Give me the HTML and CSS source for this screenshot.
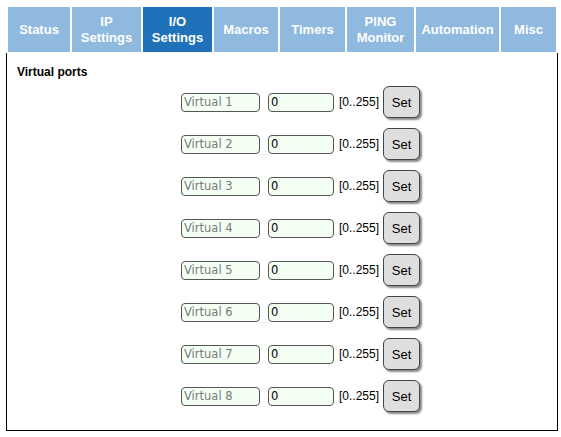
FILE: index.html
```html
<!DOCTYPE html>
<html lang="en">
<head>
    <meta charset="UTF-8">
    <title>I/O Settings</title>
    <link rel="stylesheet" href="styles.css">
</head>
<body>
    <div class="page">
        <div class="tabs">
            <a class="tab tab-status">Status</a>
            <a class="tab tab-ip">IP<br>Settings</a>
            <a class="tab tab-io active">I/O<br>Settings</a>
            <a class="tab tab-macros">Macros</a>
            <a class="tab tab-timers">Timers</a>
            <a class="tab tab-ping">PING<br>Monitor</a>
            <a class="tab tab-auto">Automation</a>
            <a class="tab tab-misc">Misc</a>
        </div>
        <div class="panel">
            <div class="section-title">Virtual ports</div>
            <div class="ports">
                <div class="port-row">
                    <input class="port-name" type="text" value="Virtual 1">
                    <input class="port-value" type="text" value="0">
                    <span class="range">[0..255]</span>
                    <button class="set-btn">Set</button>
                </div>
                <div class="port-row">
                    <input class="port-name" type="text" value="Virtual 2">
                    <input class="port-value" type="text" value="0">
                    <span class="range">[0..255]</span>
                    <button class="set-btn">Set</button>
                </div>
                <div class="port-row">
                    <input class="port-name" type="text" value="Virtual 3">
                    <input class="port-value" type="text" value="0">
                    <span class="range">[0..255]</span>
                    <button class="set-btn">Set</button>
                </div>
                <div class="port-row">
                    <input class="port-name" type="text" value="Virtual 4">
                    <input class="port-value" type="text" value="0">
                    <span class="range">[0..255]</span>
                    <button class="set-btn">Set</button>
                </div>
                <div class="port-row">
                    <input class="port-name" type="text" value="Virtual 5">
                    <input class="port-value" type="text" value="0">
                    <span class="range">[0..255]</span>
                    <button class="set-btn">Set</button>
                </div>
                <div class="port-row">
                    <input class="port-name" type="text" value="Virtual 6">
                    <input class="port-value" type="text" value="0">
                    <span class="range">[0..255]</span>
                    <button class="set-btn">Set</button>
                </div>
                <div class="port-row">
                    <input class="port-name" type="text" value="Virtual 7">
                    <input class="port-value" type="text" value="0">
                    <span class="range">[0..255]</span>
                    <button class="set-btn">Set</button>
                </div>
                <div class="port-row">
                    <input class="port-name" type="text" value="Virtual 8">
                    <input class="port-value" type="text" value="0">
                    <span class="range">[0..255]</span>
                    <button class="set-btn">Set</button>
                </div>
            </div>
        </div>
    </div>
</body>
</html>
```

FILE: styles.css
```css
body {
    margin: 0;
    padding: 0;
    background-color: #ffffff;
    font-family: "Liberation Sans", Arial, sans-serif;
}

.page {
    width: 552px;
    margin-left: 6px;
}

.tabs {
    display: flex;
    gap: 2px;
    padding: 7px 2px 0 2px;
}

.tab {
    height: 45px;
    display: flex;
    align-items: center;
    justify-content: center;
    text-align: center;
    background-color: #8fb9de;
    color: #ffffff;
    font-size: 13px;
    font-weight: bold;
    line-height: 16px;
}

.tab.active {
    background-color: #1f71ba;
}

.tab-status { width: 62px; }
.tab-ip { width: 69px; }
.tab-io { width: 69px; }
.tab-macros { width: 64px; }
.tab-timers { width: 65px; }
.tab-ping { width: 67px; }
.tab-auto { width: 83px; }
.tab-misc { width: 55px; }

.panel {
    margin-top: 1px;
    border: 1px solid #000000;
    border-top: none;
    height: 378px;
    box-sizing: border-box;
}

.section-title {
    padding: 12px 0 0 10px;
    font-size: 12px;
    font-weight: bold;
    color: #000000;
    line-height: 14px;
}

.ports {
    display: flex;
    flex-direction: column;
    gap: 10px;
    padding: 7px 0 0 174px;
}

.port-row {
    display: flex;
    align-items: center;
    height: 32px;
}

.port-name, .port-value {
    box-sizing: border-box;
    height: 19px;
    padding: 1px 2px;
    border: 1px solid #555555;
    border-radius: 4px;
    background-color: #f3fff3;
    font-family: "DejaVu Sans", Verdana, sans-serif;
    font-size: 11.5px;
    outline: none;
}

.port-name {
    width: 79px;
    color: #7a7a7a;
}

.port-value {
    width: 66px;
    margin-left: 8px;
    color: #000000;
}

.range {
    margin-left: 5px;
    font-family: "Liberation Sans", Arial, sans-serif;
    font-size: 12px;
    color: #000000;
}

.set-btn {
    margin-left: 4px;
    width: 37px;
    height: 32px;
    border: 1px solid #444444;
    border-radius: 6px;
    background-color: #dedede;
    box-shadow: 2px 2px 2px #888888;
    font-family: "Liberation Sans", Arial, sans-serif;
    font-size: 13px;
    color: #000000;
    padding: 0;
}
```
